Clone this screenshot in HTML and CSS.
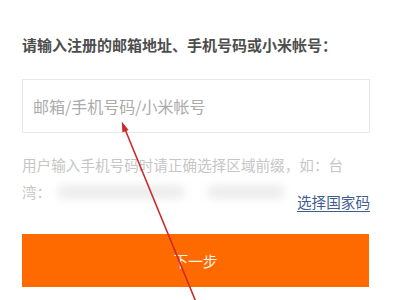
FILE: index.html
```html
<!DOCTYPE html>
<html lang="zh-CN">
<head>
<meta charset="utf-8">
<title>找回密码</title>
<link rel="stylesheet" href="styles.css">
</head>
<body>
<main class="page">
  <h1 class="title">请输入注册的邮箱地址、手机号码或小米帐号：</h1>
  <input class="field" type="text" placeholder="邮箱/手机号码/小米帐号">
  <div class="hint">
    <div class="hint-line">用户输入手机号码时请正确选择区域前缀，如：台</div>
    <div class="hint-row">
      <span class="hint-line">湾：</span>
      <span class="blur blur-a"></span>
      <span class="blur blur-b"></span>
      <a class="country" href="#">选择国家码</a>
    </div>
  </div>
  <button class="next" type="button">下一步</button>
</main>
<svg class="arrow" width="400" height="300" viewBox="0 0 400 300" aria-hidden="true">
  <line x1="124.5" y1="128" x2="196" y2="302" stroke="#cc2b2b" stroke-width="1.6"/>
  <polygon points="121.7,121.5 128.6,130 122.4,132.4" fill="#cc2b2b"/>
</svg>
</body>
</html>
```
FILE: styles.css
```css
html, body {
  margin: 0;
  padding: 0;
  background: #ffffff;
}
body {
  position: relative;
  width: 400px;
  height: 300px;
  overflow: hidden;
  font-family: "Noto Sans CJK SC", "Noto Sans", sans-serif;
}
.page {
  padding: 35px 30px 0 22px;
  display: flex;
  flex-direction: column;
}
.title {
  margin: 0;
  font-size: 15px;
  line-height: 20px;
  font-weight: 700;
  color: #4d4d4d;
  white-space: nowrap;
}
.field {
  box-sizing: border-box;
  margin: 24px 0 0 0;
  width: 348px;
  height: 54px;
  border: 1px solid #e8e8e8;
  border-radius: 0;
  padding: 0 0 0 10px;
  font-family: "Noto Sans CJK SC", sans-serif;
  font-size: 16px;
  color: #333;
  outline: none;
  background: #fff;
}
.field::placeholder {
  color: #ababab;
}
.hint {
  margin-top: 19px;
  font-size: 14.6px;
  color: #c6c6c6;
}
.hint-line {
  line-height: 26.5px;
  white-space: nowrap;
}
.hint-row {
  display: flex;
  align-items: flex-start;
}
.blur {
  display: inline-block;
  height: 14px;
  margin-top: 6px;
  background: #ededed;
  filter: blur(4px);
  border-radius: 7px;
}
.blur-a {
  width: 128px;
  margin-left: 6px;
}
.blur-b {
  width: 78px;
  margin-left: 22px;
}
.country {
  margin-left: auto;
  margin-top: 13px;
  font-size: 14.6px;
  line-height: 20px;
  color: #3f5c8e;
  text-decoration: underline;
  text-underline-offset: 3px;
  text-decoration-thickness: 1px;
}
.next {
  margin-top: 22px;
  width: 347px;
  height: 53px;
  border: none;
  border-radius: 0;
  background: #ff6a00;
  color: #fff4ea;
  font-family: "Noto Sans CJK SC", sans-serif;
  font-size: 14.7px;
  padding: 0;
}
.arrow {
  position: absolute;
  left: 0;
  top: 0;
  pointer-events: none;
}
```
